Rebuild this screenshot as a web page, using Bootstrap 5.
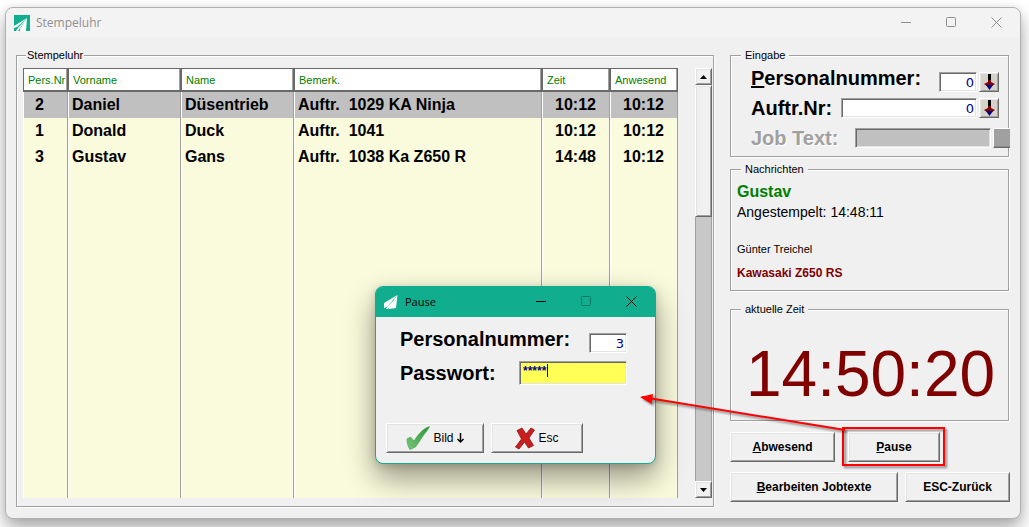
<!DOCTYPE html>
<html lang="de">
<head>
<meta charset="utf-8">
<meta name="viewport" content="width=device-width, initial-scale=1">
<title>Stempeluhr</title>
<link href="https://cdn.jsdelivr.net/npm/bootstrap@5.3.0/dist/css/bootstrap.min.css" rel="stylesheet">
<style>
  :root { --face: #f0f0f0; --line: #a0a0a0; --dark: #696969; --teal: #10ae8f; }
  body { font-family: "Liberation Sans", Arial, sans-serif; font-size: 11px; line-height: 14px; color: #000; background: #fff; padding: 7px 8px 8px 5px; overflow: hidden; }
  .app-window { background: var(--face); border: 1px solid #b0b0b0; border-radius: 8px; box-shadow: 0 10px 18px rgba(0,0,0,.32), 0 0 8px rgba(0,0,0,.08); }
  .title-bar { height: 30px; background: #f3f3f3; border-radius: 8px 8px 0 0; padding: 0 1px 0 8px; gap: 6px; font-family: "Open Sans", "Noto Sans", sans-serif; font-size: 12px; color: #8f8f8f; }
  .win-ctls { height: 29px; }
  .win-ctl { width: 45px; height: 28px; border: 0; padding: 0; background: none; color: inherit; }
  .win-ctl svg { display: block; margin: auto; fill: none; stroke: currentColor; }
  .content-area { padding: 10px 10px 11px 10px; gap: 15px; }
  .side-col { width: 280px; }

  .group { border: 1px solid var(--line); box-shadow: 1px 1px #fff, inset 1px 1px #fff; margin-right: 1px; }
  .group > legend { float: none; width: auto; font-size: 11px; line-height: 14px; margin: 0 0 0 10px; padding: 0 4px; background: var(--face); }
  .group > .tight { margin-left: 9px; padding: 0 1px; }
  .mt-news { margin-top: 5px; }
  .mt-block { margin-top: 11px; }
  .btn-row { margin-top: 10px; gap: 7px; }

  .clock-list { padding: 6px 1px 8px 6px; gap: 17px; }
  .staff { table-layout: fixed; border-collapse: separate; border-spacing: 0; background: #fafadc; font-size: 16px; font-weight: bold; height: 430px; }
  .c-nr { width: 45px; }
  .c-name { width: 113px; }
  .c-time { width: 68px; }
  .staff th { height: 24px; background: #fff; color: #008000; font-size: 11px; font-weight: normal; padding: 0 0 0 4px; border: solid var(--dark); border-width: 1px 1px 2px 1px; box-shadow: inset -1px 0 var(--line); white-space: nowrap; overflow: hidden; }
  .staff td { height: 26px; line-height: 26px; padding: 0 0 0 4px; border-right: 1px solid var(--line); box-shadow: inset 1px 0 #fff; white-space: pre; }
  .staff .filler td { height: auto; }
  .staff .num { padding-left: 12px; }
  .staff .time { padding: 0; text-align: center; }
  .staff .picked td { background: #c0c0c0; }

  .scroller { width: 17px; background: #c8c8c8; border: solid var(--line); border-width: 0 1px; }
  .bevel { background: var(--face); border: 1px solid; border-color: #fff var(--dark) var(--dark) #fff; box-shadow: inset 1px 1px #e3e3e3, inset -1px -1px var(--line); border-radius: 0; color: #000; }
  .scroller .bevel { height: 17px; margin: 0 -1px; padding: 0; }
  .scroller .thumb { height: 132px; }
  .tri { display: block; margin: auto; fill: #000; }

  .big-label { font-size: 20px; line-height: 20px; font-weight: bold; white-space: nowrap; }
  .off { color: var(--line); text-shadow: 1px 1px #fff; }
  .field { height: 20px; border: 1px solid; border-color: var(--line) #fff #fff var(--line); box-shadow: inset 1px 1px var(--dark), inset -1px -1px #e3e3e3; border-radius: 0; background: #fff; color: #000090; font-family: "DejaVu Sans", sans-serif; font-size: 13px; text-align: right; padding: 0 2px; min-width: 0; outline: 0; }
  .w-short { width: 38px; }
  .w-wide { width: 136px; }
  .field:disabled { background: #c0c0c0; }
  .pick { width: 20px; height: 20px; padding: 0; background: #d6d1c9; margin-left: 2px; }
  .pick svg { display: block; margin: auto; }
  .pick:disabled { width: 17px; background: var(--line); border-right: 0; box-shadow: inset 0 -1px #8a8a8a; }
  .entry { padding: 6px 9px 8px 20px; }
  .entry .gap-row { margin-bottom: 6px; height: 20px; }
  .entry .first { height: 24px; }
  .entry .last { margin: 10px -11px 0 0; }

  .news { padding: 6px 6px 10px; }
  .news p { margin: 0; }
  .who { font-size: 16px; line-height: 20px; color: #008000; font-weight: bold; }
  .stamp { font-size: 14px; line-height: 20px; }
  .news .customer { margin-top: 20px; }
  .news .bike { margin-top: 10px; color: #800000; font-size: 12px; font-weight: bold; }
  .clock { font-size: 64px; line-height: 90px; color: #800000; padding: 13px 0 1px 2px; }

  .push { height: 30px; padding: 0 4px; font-size: 12px; font-weight: bold; line-height: 14px; }
  .w-105 { width: 105px; }
  .w-98 { width: 98px; }
  .w-92 { width: 92px; }
  .marked { margin-left: 13px; }
  .marked::after { content: ""; position: absolute; inset: -5px -5px -4px -6px; border: 2px solid #f00; filter: drop-shadow(2px 2px 1px rgba(0,0,0,.45)); pointer-events: none; }
  .pointer { position: absolute; right: 91px; bottom: 28px; z-index: 20; pointer-events: none; filter: drop-shadow(2px 2px 1px rgba(0,0,0,.45)); }

  .pause-dialog { position: absolute; left: 369px; top: 278px; width: 281px; z-index: 10; background: var(--face); border: 1px solid var(--teal); border-radius: 8px; box-shadow: 0 14px 30px rgba(0,0,0,.4), 0 2px 8px rgba(0,0,0,.15); }
  .pause-dialog .title-bar { background: var(--teal); color: #000; font-size: 11px; gap: 7px; border-radius: 6px 6px 0 0; }
  .dialog-form { padding: 12px 28px 0 24px; }
  .dialog-form .first { height: 24px; margin-bottom: 8px; }
  .secret { width: 108px; height: 24px; background: #ffff55; text-align: left; font: bold 12px "Liberation Sans", sans-serif; padding: 0 3px 4px; }
  .caret { position: absolute; left: 28px; top: 3px; width: 1px; height: 13px; background: #000090; }
  .dialog-buttons { padding: 38px 10px 10px; gap: 7px; }
  .dialog-buttons .push { font-weight: normal; gap: 3px; }
</style>
</head>
<body class="vh-100 d-flex">
<main class="app-window position-relative flex-fill d-flex flex-column">
  <header class="title-bar d-flex align-items-center">
    <svg width="16" height="16" viewBox="0 0 16 16" aria-hidden="true"><path fill="#10ae8f" d="M0 0h16v16H0z"/><path fill="#fff" d="M13 3 0 11v2l3-1zM13 3 4 13l-2 3h2zM13 3 6 14v2h6z"/></svg>
    <span class="me-auto">Stempeluhr</span>
    <div class="win-ctls d-flex">
      <button class="win-ctl" aria-label="Minimieren"><svg width="11" height="11"><path d="M0 5.500h10"/></svg></button>
      <button class="win-ctl" aria-label="Maximieren"><svg width="11" height="11"><rect x=".5" y=".5" width="9" height="9" rx="1"/></svg></button>
      <button class="win-ctl" aria-label="Schließen"><svg width="11" height="11"><path d="M.5.5l10 10M10.500.5l-10 10"/></svg></button>
    </div>
  </header>

  <div class="content-area d-flex flex-fill">
    <fieldset class="group flex-fill d-flex flex-column">
      <legend class="tight">Stempeluhr</legend>
      <div class="clock-list d-flex flex-fill">
        <table class="staff flex-fill">
          <colgroup><col class="c-nr"><col class="c-name"><col class="c-name"><col><col class="c-time"><col class="c-time"></colgroup>
          <thead><tr><th>Pers.Nr</th><th>Vorname</th><th>Name</th><th>Bemerk.</th><th>Zeit</th><th>Anwesend</th></tr></thead>
          <tbody>
            <tr class="picked"><td class="num">2</td><td>Daniel</td><td>Düsentrieb</td><td>Auftr.  1029 KA Ninja</td><td class="time">10:12</td><td class="time">10:12</td></tr>
            <tr><td class="num">1</td><td>Donald</td><td>Duck</td><td>Auftr.  1041</td><td class="time">10:12</td><td class="time">10:12</td></tr>
            <tr><td class="num">3</td><td>Gustav</td><td>Gans</td><td>Auftr.  1038 Ka Z650 R</td><td class="time">14:48</td><td class="time">10:12</td></tr>
            <tr class="filler"><td></td><td></td><td></td><td></td><td></td><td></td></tr>
          </tbody>
        </table>
        <div class="scroller d-flex flex-column">
          <button class="bevel" aria-label="Nach oben"><svg class="tri" width="7" height="4"><path d="M0 4h7L3.500 0z"/></svg></button>
          <div class="bevel thumb"></div>
          <button class="bevel mt-auto" aria-label="Nach unten"><svg class="tri" width="7" height="4"><path d="M0 0h7L3.500 4z"/></svg></button>
        </div>
      </div>
    </fieldset>

    <div class="side-col flex-shrink-0">
      <fieldset class="group">
        <legend>Eingabe</legend>
        <div class="entry">
          <div class="gap-row first d-flex align-items-end">
            <label class="big-label align-self-start me-auto" for="persnr"><u>P</u>ersonalnummer:</label>
            <input class="field w-short" id="persnr" value="0">
            <button class="bevel pick" aria-label="Personal wählen"><svg width="11" height="16"><path d="M4 0h3v7H4z"/><path fill="#800000" d="M4 6h3v2l4 2-3 2H3L0 10l4-2z"/><path fill="#00008b" d="M2 11h7l-3.500 5z"/></svg></button>
          </div>
          <div class="gap-row d-flex align-items-center">
            <label class="big-label me-auto" for="auftrnr">Auftr.Nr:</label>
            <input class="field w-wide" id="auftrnr" value="0">
            <button class="bevel pick" aria-label="Auftrag wählen"><svg width="11" height="16"><path d="M4 0h3v7H4z"/><path fill="#800000" d="M4 6h3v2l4 2-3 2H3L0 10l4-2z"/><path fill="#00008b" d="M2 11h7l-3.500 5z"/></svg></button>
          </div>
          <div class="last d-flex align-items-center">
            <label class="big-label off me-auto" for="jobtext">Job Text:</label>
            <input class="field w-wide" id="jobtext" disabled>
            <button class="bevel pick" aria-label="Jobtext wählen" disabled></button>
          </div>
        </div>
      </fieldset>

      <fieldset class="group mt-news">
        <legend>Nachrichten</legend>
        <div class="news">
          <p class="who">Gustav</p>
          <p class="stamp">Angestempelt: 14:48:11</p>
          <p class="customer">Günter Treichel</p>
          <p class="bike">Kawasaki Z650 RS</p>
        </div>
      </fieldset>

      <fieldset class="group mt-block">
        <legend>aktuelle Zeit</legend>
        <div class="clock text-center">14:50:20</div>
      </fieldset>

      <div class="d-flex mt-block">
        <button class="bevel push w-105"><u>A</u>bwesend</button>
        <div class="marked position-relative">
          <button class="bevel push w-92"><u>P</u>ause</button>
          <svg class="pointer" width="215" height="50" aria-hidden="true"><path d="M8 13 211 46" stroke="#f00" stroke-width="2"/><path fill="#f00" d="M6 13 19 10 17.500 20z"/></svg>
        </div>
      </div>
      <div class="d-flex btn-row">
        <button class="bevel push flex-fill"><u>B</u>earbeiten Jobtexte</button>
        <button class="bevel push w-105">ESC-Zurück</button>
      </div>
    </div>
  </div>

  <section class="pause-dialog" role="dialog" aria-labelledby="dlg-title">
    <header class="title-bar d-flex align-items-center">
      <svg width="14" height="14" viewBox="0 0 14 14" aria-hidden="true"><path fill="#fff" d="M13.500 0 0 8v5l3-1zM13 2 4 11l-2 3h2zM13.500 0 5 12v2l7-1z"/></svg>
      <span class="me-auto" id="dlg-title">Pause</span>
      <div class="win-ctls d-flex">
        <button class="win-ctl" aria-label="Minimieren"><svg width="11" height="11"><path d="M0 5.500h10"/></svg></button>
        <button class="win-ctl" aria-label="Maximieren" disabled><svg width="11" height="11" opacity=".3"><rect x=".5" y=".5" width="9" height="9" rx="1"/></svg></button>
        <button class="win-ctl" aria-label="Schließen"><svg width="11" height="11"><path d="M.5.5l10 10M10.500.5l-10 10"/></svg></button>
      </div>
    </header>
    <div class="dialog-form">
      <div class="first d-flex align-items-end">
        <label class="big-label align-self-start me-auto" for="dlg-nr">Personalnummer:</label>
        <input class="field w-short" id="dlg-nr" value="3">
      </div>
      <div class="d-flex align-items-center">
        <label class="big-label me-auto" for="dlg-pw">Passwort:</label>
        <div class="position-relative d-flex">
          <input class="field secret" id="dlg-pw" value="*****" autocomplete="off">
          <span class="caret"></span>
        </div>
      </div>
    </div>
    <div class="dialog-buttons d-flex">
      <button class="bevel push w-98 d-flex align-items-center justify-content-center">
        <svg width="24" height="24" viewBox="0 0 24 24" aria-hidden="true"><defs><linearGradient id="ok" x1="1" y1="0" x2="0" y2="1"><stop offset="0" stop-color="#239a33"/><stop offset="1" stop-color="#7cc47c"/></linearGradient></defs><path fill="url(#ok)" stroke="#3f9a48" stroke-width=".6" d="M1 13 4.500 11 8 15C12 9 16 3 23.500.5 22 4 19 7 17 10 14 14 12 18 9.500 21L4 23.500C2 21 1 17 1 13z"/></svg>
        <span>Bild</span>
        <svg width="7" height="11" aria-hidden="true"><path d="M3.500 0v9M.5 6l3 3 3-3" fill="none" stroke="#000" stroke-width="1.500"/></svg>
      </button>
      <button class="bevel push w-92 d-flex align-items-center justify-content-center">
        <svg width="20" height="23" viewBox="0 0 20 23" aria-hidden="true"><path fill="#c9201f" stroke="#8e1414" stroke-width=".8" d="M2 3.500 7 1l4 6 5-6 3.500 2-5.500 8 4.500 7.500-5 2.500-4-6-5.500 7L.5 20 6.500 12z"/></svg>
        <span>Esc</span>
      </button>
    </div>
  </section>
</main>
<script src="https://cdn.jsdelivr.net/npm/bootstrap@5.3.0/dist/js/bootstrap.bundle.min.js"></script>
</body>
</html>
